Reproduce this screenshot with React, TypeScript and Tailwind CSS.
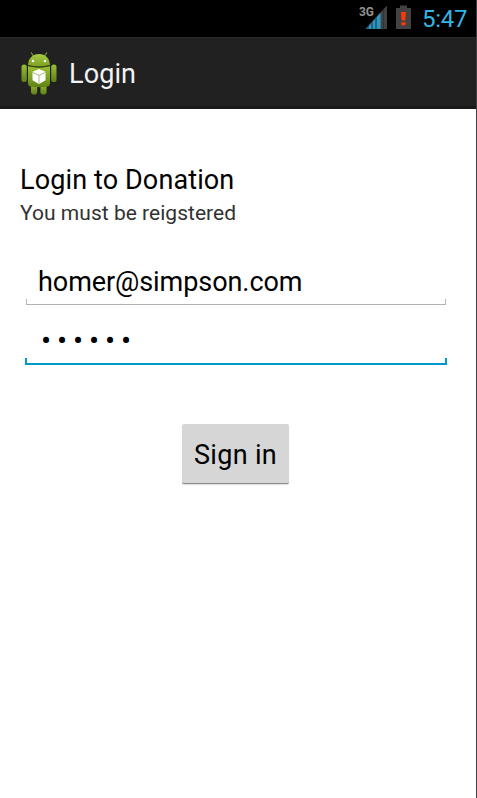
import React from "react";

function SignalIcon() {
  return (
    <svg className="block h-[26px] w-[28px]" viewBox="0 0 28 26">
      <path d="M28 1.500V25H6.500L21 8.900z" fill="#424242" />
      <path d="M21.500 8.400V25H6.500z" fill="#1c6482" />
      <path
        d="M10 22l2-2.200V25h-2zM14 17.300l2-2.300V25h-2zM18 12.700l3.500-3.800V25H18z"
        fill="#3096bf"
      />
      <path d="M24.500 5.500V25" stroke="#303030" strokeWidth="0.800" />
      <text x="0" y="12" fill="#929292" fontSize="13.500" fontWeight="700" textLength="15" lengthAdjust="spacingAndGlyphs" fontFamily="Roboto, sans-serif">
        3G
      </text>
    </svg>
  );
}

function BatteryIcon() {
  return (
    <svg className="block h-[24px] w-[15px]" viewBox="0 0 15 24">
      <path d="M4 0.500h7v2.500h4v21H0V3h4z" fill="#424242" />
      <path d="M5 7h5l-.8 8.500H5.800z" fill="#ff3708" />
      <ellipse cx="7.500" cy="18.800" rx="2.400" ry="1.700" fill="#ff3708" />
    </svg>
  );
}

function AndroidIcon() {
  return (
    <svg className="block h-[44px] w-[36px]" viewBox="0 0 36 44">
      <defs>
        <linearGradient id="head" x1="0" y1="0" x2="0" y2="1">
          <stop offset="0" stopColor="#a9cb45" />
          <stop offset="1" stopColor="#7b9f22" />
        </linearGradient>
        <linearGradient id="body" x1="0" y1="0" x2="0" y2="1">
          <stop offset="0" stopColor="#9bbf35" />
          <stop offset="0.600" stopColor="#7a9f20" />
          <stop offset="1" stopColor="#5f7f18" />
        </linearGradient>
        <linearGradient id="limb" x1="0" y1="0" x2="0" y2="1">
          <stop offset="0" stopColor="#9bbf35" />
          <stop offset="1" stopColor="#5f7f18" />
        </linearGradient>
      </defs>
      <path d="M10.300 0.800l2.500 4M25.700 0.800l-2.500 4" stroke="#7d9d27" strokeWidth="1.200" strokeLinecap="round" />
      <rect x="0.500" y="12.500" width="5.300" height="17.500" rx="2.600" fill="url(#limb)" />
      <rect x="30.200" y="12.500" width="5.300" height="17.500" rx="2.600" fill="url(#limb)" />
      <rect x="10" y="31" width="6.200" height="11.500" rx="2.800" fill="url(#limb)" />
      <rect x="19.400" y="31" width="6.200" height="11.500" rx="2.800" fill="url(#limb)" />
      <path d="M7 13C7.500 6 11.500 2 18 2S28.500 6 29 13q-11 3-22 0z" fill="url(#head)" />
      <path d="M7 14q11 3 22 0V31.500q0 2.500-2.500 3-8.500 1.500-17 0-2.500-.5-2.500-3z" fill="url(#body)" />
      <path d="M7 13.700q11 3 22 0" fill="none" stroke="#3c550a" strokeWidth="0.900" />
      <circle cx="12" cy="9" r="1.200" fill="#fff" />
      <circle cx="24" cy="9" r="1.200" fill="#fff" />
      <path d="M18 17l6.500 2.700v8.600L18 32l-6.500-3.700v-8.600z" fill="#fff" />
      <path d="M11.500 20.300l6.500 3 6.500-3M18 23.300V31.500" fill="none" stroke="#9db36c" strokeWidth="0.900" />
    </svg>
  );
}

export default function App() {
  return (
    <div className="flex h-[798px] w-[477px] flex-col overflow-hidden border-r border-[#3d3e41] bg-white font-['Roboto',sans-serif] text-black">
      <div className="flex h-[37px] shrink-0 items-start bg-black pl-[359px]">
        <div className="pt-[4px]">
          <SignalIcon />
        </div>
        <div className="ml-[9px] pt-[5px]">
          <BatteryIcon />
        </div>
        <span className="ml-[11px] pt-[3px] text-[24px] leading-[32px] tracking-[-0.3px] whitespace-nowrap text-[#33b5e5]">5:47</span>
      </div>
      <header className="flex h-[72px] shrink-0 items-start border-t border-b-3 border-t-[#2a2a2a] border-b-[#191919] bg-[#212121] pl-[21px]">
        <div className="pt-[14px]">
          <AndroidIcon />
        </div>
        <h1 className="ml-[12px] pt-[20px] text-[27px] leading-[32px] tracking-[0.1px] whitespace-nowrap text-[#f3f3f3]">Login</h1>
      </header>
      <main className="flex flex-col">
        <h2 className="mt-[55px] pl-[20px] text-[27px] leading-[32px] tracking-[0.12px] whitespace-nowrap">Login to Donation</h2>
        <p className="mt-[5px] pl-[20px] text-[21px] leading-[25px] tracking-[0.03px] whitespace-nowrap text-[#323232]">You must be reigstered</p>
        <div className="mt-[40px] ml-[26px] flex w-[420px] flex-col">
          <div className="h-[33px] pl-[12px] text-[27px] leading-[32px] tracking-[-0.07px] whitespace-nowrap">homer@simpson.com</div>
          <div className="h-[6px] border-x border-b border-[#b2b2b2]" />
        </div>
        <div className="ml-[25px] flex w-[422px] flex-col">
          <div className="mt-[20px] h-[33px] pl-[16px] text-[30px] leading-[32px] tracking-[5.890px] whitespace-nowrap">••••••</div>
          <div className="h-[7px] border-x-2 border-b-2 border-[#0099cc]" />
        </div>
        <button className="mt-[59px] ml-[182px] flex h-[60px] w-[107px] justify-center rounded-[2px] border-b border-[#8c8c8c] bg-[#d6d6d6] pt-[15px] text-[27px] leading-[32px] tracking-[0.3px] whitespace-nowrap shadow-[0_1px_1px_#dddddd]">
          Sign in
        </button>
      </main>
    </div>
  );
}
